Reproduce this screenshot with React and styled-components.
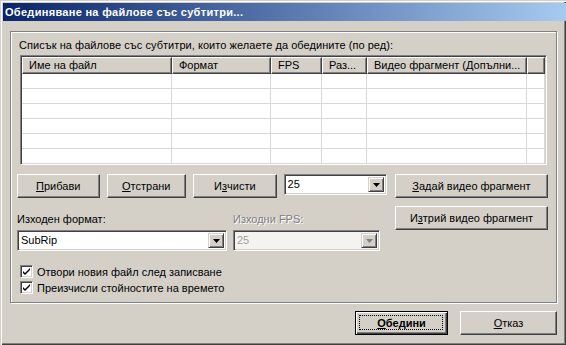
import React from 'react'
import styled, { createGlobalStyle } from 'styled-components'

const GlobalStyle = createGlobalStyle`
  body {
    margin: 0;
    background: #d4d0c8;
    font-family: "Liberation Sans", Arial, sans-serif;
    font-size: 11px;
    color: #000;
  }
`

const columns = [
  { title: 'Име на файл', width: 150 },
  { title: 'Формат', width: 99 },
  { title: 'FPS', width: 51 },
  { title: 'Раз...', width: 45 },
  { title: 'Видео фрагмент (Допълни...', width: 160 },
]

const Window = styled.div`
  box-sizing: border-box;
  width: 566px;
  height: 345px;
  padding: 3px 0 0 3px;
  background: #d4d0c8;
  box-shadow: inset 1px 1px #d4d0c8, inset 2px 2px #fff, inset -1px -1px #404040,
    inset -2px -2px #808080;
  display: flex;
  flex-direction: column;
`

const TitleBar = styled.div`
  height: 18px;
  display: flex;
  align-items: center;
  padding-left: 2px;
  background: linear-gradient(to right, #0a246a, #a6caf0);
  color: #fff;
  font-weight: bold;
  font-size: 11px;
  letter-spacing: 0.3px;
  white-space: nowrap;
`

const GroupBox = styled.div`
  box-sizing: border-box;
  width: 547px;
  height: 272px;
  margin: 10px 0 0 7px;
  padding: 6px 8px 0 6px;
  border: 1px solid #808080;
  box-shadow: inset 1px 1px #fff, 1px 1px #fff;
  display: flex;
  flex-direction: column;
`

const Caption = styled.div`
  height: 14px;
  line-height: 14px;
  margin-left: 2px;
  letter-spacing: 0.05px;
  white-space: nowrap;
`

const ListView = styled.div`
  box-sizing: border-box;
  width: 527px;
  height: 110px;
  margin: 3px 0 0 3px;
  border: 1px solid;
  border-color: #808080 #fff #fff #808080;
  box-shadow: inset 1px 1px #404040, inset -1px -1px #d4d0c8;
  background: #fff;
  padding: 1px;
  overflow: hidden;
`

const Header = styled.div`
  display: flex;
  height: 17px;
  background: #d4d0c8;
`

const HeaderCell = styled.div`
  box-sizing: border-box;
  flex: ${(p) => (p.$width ? `0 0 ${p.$width}px` : '1')};
  height: 17px;
  line-height: 15px;
  padding-left: 6px;
  border: 1px solid;
  border-color: #fff #404040 #404040 #fff;
  box-shadow: inset -1px -1px #808080;
  white-space: nowrap;
  overflow: hidden;
`

const Rows = styled.div`
  display: flex;
  flex-direction: column;
`

const Row = styled.div`
  display: flex;
  height: 14px;
  border-bottom: 1px solid #d8d8d8;
`

const Cell = styled.div`
  box-sizing: border-box;
  flex: ${(p) => (p.$width ? `0 0 ${p.$width}px` : '1')};
  border-right: 1px solid #d8d8d8;
`

const Controls = styled.div`
  display: flex;
  gap: 8px;
  margin-top: 9px;
`

const LeftColumn = styled.div`
  display: flex;
  flex-direction: column;
  width: 370px;
`

const ButtonRow = styled.div`
  display: flex;
  align-items: flex-start;
  gap: 7px;
`

const RightColumn = styled.div`
  display: flex;
  flex-direction: column;
  gap: 8px;
`

const Button = styled.div`
  box-sizing: border-box;
  width: ${(p) => p.$width}px;
  height: ${(p) => p.$height || 24}px;
  display: flex;
  align-items: center;
  justify-content: center;
  border: 1px solid;
  border-color: #fff #404040 #404040 #fff;
  box-shadow: inset -1px -1px #808080;
  background: #d4d0c8;
  white-space: nowrap;
  position: relative;
`

const DefaultButton = styled(Button)`
  border: 1px solid #000;
  box-shadow: inset 1px 1px #fff, inset -1px -1px #404040, inset -2px -2px #808080;
  font-weight: bold;

  &::after {
    content: '';
    position: absolute;
    inset: 3px 4px 4px 3px;
    border: 1px dotted #000;
  }
`

const Combo = styled.div`
  box-sizing: border-box;
  width: ${(p) => p.$width}px;
  height: 21px;
  display: flex;
  align-items: stretch;
  border: 1px solid;
  border-color: #808080 #fff #fff #808080;
  box-shadow: inset 1px 1px #404040, inset -1px -1px #d4d0c8;
  background: ${(p) => (p.$disabled ? '#f4f3ef' : '#fff')};
  padding: 2px;
`

const ComboText = styled.div`
  flex: 1;
  line-height: 15px;
  padding-left: 1px;
  color: ${(p) => (p.$disabled ? '#a0a0a0' : '#000')};
`

const ArrowButton = styled.div`
  box-sizing: border-box;
  width: 16px;
  display: flex;
  align-items: center;
  justify-content: center;
  border: 1px solid;
  border-color: #d4d0c8 #404040 #404040 #d4d0c8;
  box-shadow: inset 1px 1px #fff, inset -1px -1px #808080;
  background: #d4d0c8;
`

const FieldsRow = styled.div`
  display: flex;
  gap: 6px;
  margin-top: 15px;
`

const Field = styled.div`
  display: flex;
  flex-direction: column;
  gap: 4px;
`

const Label = styled.div`
  height: 13px;
  line-height: 13px;
  color: ${(p) => (p.$disabled ? '#808080' : '#000')};
  text-shadow: ${(p) => (p.$disabled ? '1px 1px #fff' : 'none')};
`

const Checks = styled.div`
  display: flex;
  flex-direction: column;
  gap: 3px;
  margin: 14px 0 0 3px;
`

const CheckRow = styled.div`
  display: flex;
  align-items: center;
  gap: 4px;
  height: 13px;
`

const CheckBox = styled.div`
  box-sizing: border-box;
  width: 13px;
  height: 13px;
  border: 1px solid;
  border-color: #808080 #fff #fff #808080;
  box-shadow: inset 1px 1px #404040, inset -1px -1px #d4d0c8;
  background: #fff;
  display: flex;
  align-items: center;
  justify-content: center;
`

const Footer = styled.div`
  display: flex;
  justify-content: flex-end;
  gap: 12px;
  margin-top: 8px;
  padding-right: 9px;
`

const U = styled.span`
  text-decoration: underline;
`

const Arrow = ({ disabled }) => (
  <svg width="7" height="4" viewBox="0 0 7 4">
    <path d="M0 0h7L3.5 4z" fill={disabled ? '#808080' : '#000'} />
  </svg>
)

const Check = () => (
  <svg width="7" height="7" viewBox="0 0 7 7">
    <path d="M0 2l2 2 5-5v2L2 6 0 4z" fill="#000" transform="translate(0 1)" />
  </svg>
)

const DropDown = ({ width, value, disabled }) => (
  <Combo $width={width} $disabled={disabled}>
    <ComboText $disabled={disabled}>{value}</ComboText>
    <ArrowButton>
      <Arrow disabled={disabled} />
    </ArrowButton>
  </Combo>
)

export default function App() {
  return (
    <>
      <GlobalStyle />
      <Window>
        <TitleBar>Обединяване на файлове със субтитри...</TitleBar>
        <GroupBox>
          <Caption>Списък на файлове със субтитри, които желаете да обедините (по ред):</Caption>
          <ListView>
            <Header>
              {columns.map((c) => (
                <HeaderCell key={c.title} $width={c.width}>
                  {c.title}
                </HeaderCell>
              ))}
              <HeaderCell />
            </Header>
            <Rows>
              {[0, 1, 2, 3, 4, 5].map((r) => (
                <Row key={r}>
                  {columns.map((c) => (
                    <Cell key={c.title} $width={c.width} />
                  ))}
                  <Cell />
                </Row>
              ))}
            </Rows>
          </ListView>
          <Controls>
            <LeftColumn>
              <ButtonRow>
                <Button $width={83}>
                  <U>П</U>рибави
                </Button>
                <Button $width={80}>
                  <U>О</U>тстрани
                </Button>
                <Button $width={84}>
                  И<U>з</U>чисти
                </Button>
                <DropDown width={104} value="25" />
              </ButtonRow>
              <FieldsRow>
                <Field>
                  <Label>Изходен формат:</Label>
                  <DropDown width={210} value="SubRip" />
                </Field>
                <Field>
                  <Label $disabled>Изходни FPS:</Label>
                  <DropDown width={147} value="25" disabled />
                </Field>
              </FieldsRow>
            </LeftColumn>
            <RightColumn>
              <Button $width={153}>
                <U>З</U>адай видео фрагмент
              </Button>
              <Button $width={153}>
                И<U>з</U>трий видео фрагмент
              </Button>
            </RightColumn>
          </Controls>
          <Checks>
            <CheckRow>
              <CheckBox>
                <Check />
              </CheckBox>
              Отвори новия файл след записване
            </CheckRow>
            <CheckRow>
              <CheckBox>
                <Check />
              </CheckBox>
              Преизчисли стойностите на времето
            </CheckRow>
          </Checks>
        </GroupBox>
        <Footer>
          <DefaultButton $width={93}>
            <U>О</U>бедини
          </DefaultButton>
          <Button $width={97}>
            <U>О</U>тказ
          </Button>
        </Footer>
      </Window>
    </>
  )
}
